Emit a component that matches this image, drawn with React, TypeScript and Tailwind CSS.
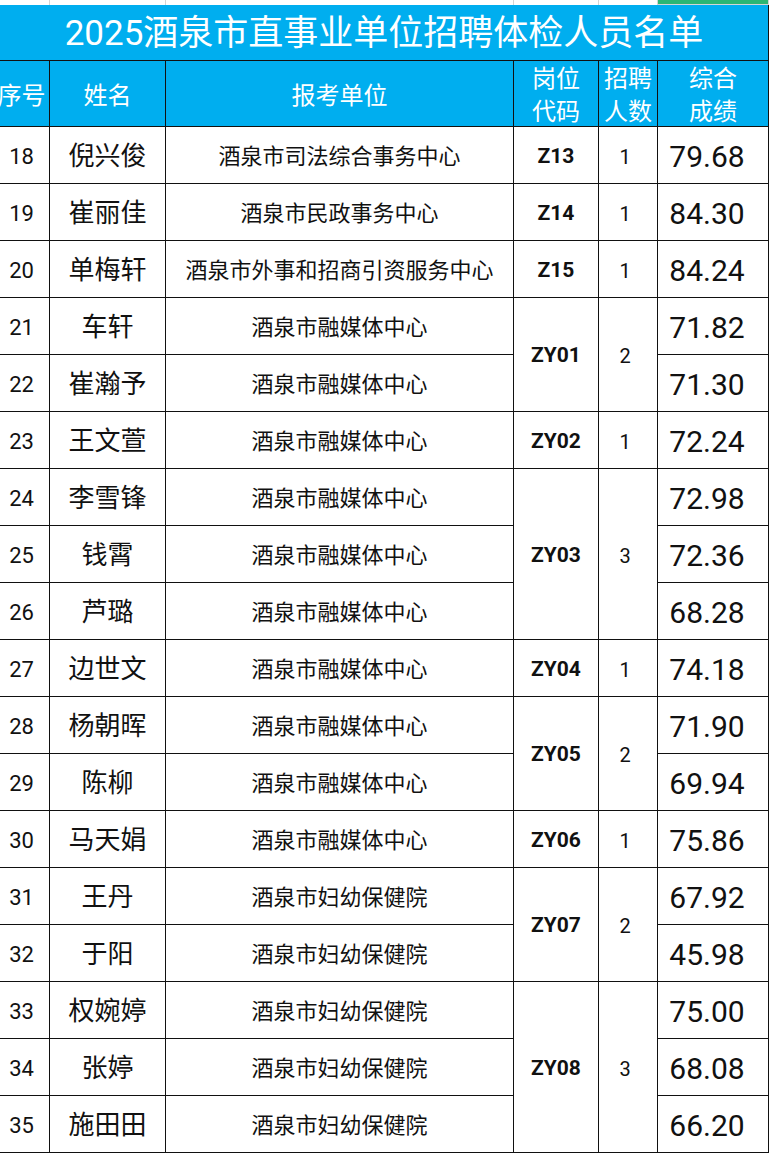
import React from "react";

type Row = {
  no: number;
  name: string;
  unit: string;
  code?: string;
  count?: number;
  span?: number;
  score: string;
};

const FMC = "font-['Roboto','Noto_Sans_CJK_SC',sans-serif]";

const rows: Row[] = [
  { no: 18, name: "倪兴俊", unit: "酒泉市司法综合事务中心", code: "Z13", count: 1, span: 1, score: "79.68" },
  { no: 19, name: "崔丽佳", unit: "酒泉市民政事务中心", code: "Z14", count: 1, span: 1, score: "84.30" },
  { no: 20, name: "单梅轩", unit: "酒泉市外事和招商引资服务中心", code: "Z15", count: 1, span: 1, score: "84.24" },
  { no: 21, name: "车轩", unit: "酒泉市融媒体中心", code: "ZY01", count: 2, span: 2, score: "71.82" },
  { no: 22, name: "崔瀚予", unit: "酒泉市融媒体中心", score: "71.30" },
  { no: 23, name: "王文萱", unit: "酒泉市融媒体中心", code: "ZY02", count: 1, span: 1, score: "72.24" },
  { no: 24, name: "李雪锋", unit: "酒泉市融媒体中心", code: "ZY03", count: 3, span: 3, score: "72.98" },
  { no: 25, name: "钱霄", unit: "酒泉市融媒体中心", score: "72.36" },
  { no: 26, name: "芦璐", unit: "酒泉市融媒体中心", score: "68.28" },
  { no: 27, name: "边世文", unit: "酒泉市融媒体中心", code: "ZY04", count: 1, span: 1, score: "74.18" },
  { no: 28, name: "杨朝晖", unit: "酒泉市融媒体中心", code: "ZY05", count: 2, span: 2, score: "71.90" },
  { no: 29, name: "陈柳", unit: "酒泉市融媒体中心", score: "69.94" },
  { no: 30, name: "马天娟", unit: "酒泉市融媒体中心", code: "ZY06", count: 1, span: 1, score: "75.86" },
  { no: 31, name: "王丹", unit: "酒泉市妇幼保健院", code: "ZY07", count: 2, span: 2, score: "67.92" },
  { no: 32, name: "于阳", unit: "酒泉市妇幼保健院", score: "45.98" },
  { no: 33, name: "权婉婷", unit: "酒泉市妇幼保健院", code: "ZY08", count: 3, span: 3, score: "75.00" },
  { no: 34, name: "张婷", unit: "酒泉市妇幼保健院", score: "68.08" },
  { no: 35, name: "施田田", unit: "酒泉市妇幼保健院", score: "66.20" },
];

function spanClass(span?: number) {
  if (span === 3) return "row-span-3";
  if (span === 2) return "row-span-2";
  return "";
}

const cell = "bg-white flex items-center justify-center pt-[3px] text-[#111]";
const head = "bg-[#00aeef] flex items-center justify-center pt-[5px] text-white text-[24px] leading-[33px] text-center";

export default function App() {
  return (
    <div className={`w-[771px] h-[1153px] overflow-hidden bg-white ${FMC}`}>
      {/* spreadsheet row peeking above the title */}
      <div className="ml-[-6px] grid h-[5px] w-[775px] grid-cols-[55px_115px_347px_84px_58px_110px_1px] gap-x-px bg-[#d4d4d4]">
        <div className="bg-white" />
        <div className="bg-white" />
        <div className="bg-white" />
        <div className="bg-white" />
        <div className="bg-white" />
        <div className="h-[4px] bg-[#2bb673]" />
        <div className="bg-white" />
      </div>

      <div className="ml-[-6px] grid w-[775px] grid-cols-[55px_115px_347px_84px_58px_110px] grid-rows-[55px_65px_repeat(18,56px)] gap-px border-r border-b border-[#111] bg-[#111]">
        <div className="col-span-6 flex items-center justify-center bg-[#00aeef] pl-[6px] pt-[2px] text-[35px] leading-none text-white">
          2025酒泉市直事业单位招聘体检人员名单
        </div>

        <div className={head}>序号</div>
        <div className={head}>姓名</div>
        <div className={head}>报考单位</div>
        <div className={head}>
          岗位
          <br />
          代码
        </div>
        <div className={head}>
          招聘
          <br />
          人数
        </div>
        <div className={head}>
          综合
          <br />
          成绩
        </div>

        {rows.map((r) => (
          <React.Fragment key={r.no}>
            <div className={`${cell} text-[22px]`}>{r.no}</div>
            <div className={`${cell} text-[26px]`}>{r.name}</div>
            <div className={`${cell} text-[22px]`}>{r.unit}</div>
            {r.code ? (
              <>
                <div className={`${cell} ${spanClass(r.span)} text-[21px] font-bold`}>{r.code}</div>
                <div className={`${cell} ${spanClass(r.span)} pr-[6px] text-[20px]`}>{r.count}</div>
              </>
            ) : null}
            <div className={`${cell} pr-[12px] text-[30px]`}>{r.score}</div>
          </React.Fragment>
        ))}
      </div>
    </div>
  );
}
